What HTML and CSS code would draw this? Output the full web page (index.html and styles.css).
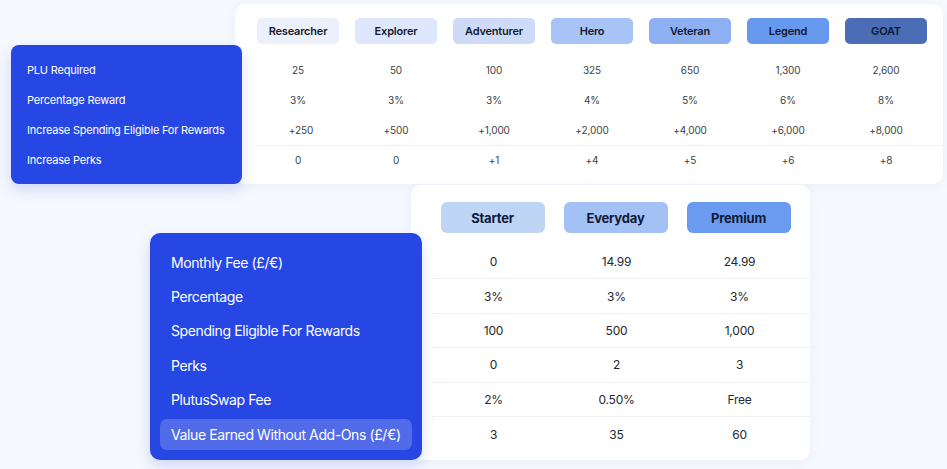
FILE: index.html
```
<!DOCTYPE html>
<html>
<head>
<meta charset="utf-8">
<link rel="stylesheet" href="styles.css">
</head>
<body>
<section class="top">
  <div class="panel panel-sm">
    <div class="plabel">PLU Required</div>
    <div class="plabel">Percentage Reward</div>
    <div class="plabel">Increase Spending Eligible For Rewards</div>
    <div class="plabel">Increase Perks</div>
  </div>
  <div class="card card-top">
    <div class="trow head">
      <div class="cell"><span class="pill t1">Researcher</span></div>
      <div class="cell"><span class="pill t2">Explorer</span></div>
      <div class="cell"><span class="pill t3">Adventurer</span></div>
      <div class="cell"><span class="pill t4">Hero</span></div>
      <div class="cell"><span class="pill t5">Veteran</span></div>
      <div class="cell"><span class="pill t6">Legend</span></div>
      <div class="cell"><span class="pill t7">GOAT</span></div>
    </div>
    <div class="trow data">
      <div class="cell">25</div><div class="cell">50</div><div class="cell">100</div><div class="cell">325</div><div class="cell">650</div><div class="cell">1,300</div><div class="cell">2,600</div>
    </div>
    <div class="trow data">
      <div class="cell">3%</div><div class="cell">3%</div><div class="cell">3%</div><div class="cell">4%</div><div class="cell">5%</div><div class="cell">6%</div><div class="cell">8%</div>
    </div>
    <div class="trow data lined">
      <div class="cell">+250</div><div class="cell">+500</div><div class="cell">+1,000</div><div class="cell">+2,000</div><div class="cell">+4,000</div><div class="cell">+6,000</div><div class="cell">+8,000</div>
    </div>
    <div class="trow data">
      <div class="cell">0</div><div class="cell">0</div><div class="cell">+1</div><div class="cell">+4</div><div class="cell">+5</div><div class="cell">+6</div><div class="cell">+8</div>
    </div>
  </div>
</section>
<section class="bottom">
  <div class="panel panel-lg">
    <div class="blabel">Monthly Fee (£/€)</div>
    <div class="blabel">Percentage</div>
    <div class="blabel">Spending Eligible For Rewards</div>
    <div class="blabel">Perks</div>
    <div class="blabel">PlutusSwap Fee</div>
    <div class="blabel active">Value Earned Without Add-Ons (£/€)</div>
  </div>
  <div class="card card-bot">
    <div class="brow head">
      <div class="bcell"><span class="bpill s1">Starter</span></div>
      <div class="bcell"><span class="bpill s2">Everyday</span></div>
      <div class="bcell"><span class="bpill s3">Premium</span></div>
    </div>
    <div class="brow data"><div class="bcell">0</div><div class="bcell">14.99</div><div class="bcell">24.99</div></div>
    <div class="brow data"><div class="bcell">3%</div><div class="bcell">3%</div><div class="bcell">3%</div></div>
    <div class="brow data"><div class="bcell">100</div><div class="bcell">500</div><div class="bcell">1,000</div></div>
    <div class="brow data"><div class="bcell">0</div><div class="bcell">2</div><div class="bcell">3</div></div>
    <div class="brow data"><div class="bcell">2%</div><div class="bcell">0.50%</div><div class="bcell">Free</div></div>
    <div class="brow data last"><div class="bcell">3</div><div class="bcell">35</div><div class="bcell">60</div></div>
  </div>
</section>
</body>
</html>
```
FILE: styles.css
```
* { box-sizing: border-box; }
html, body { margin: 0; padding: 0; }
body {
  width: 947px;
  height: 469px;
  overflow: hidden;
  background: #f5f8fd;
  font-family: Inter, "Noto Sans", sans-serif;
  color: #2a2f3a;
}
.top {
  display: flex;
  align-items: flex-start;
  padding: 4px 0 0 11px;
  height: 185px;
}
.panel {
  position: relative;
  z-index: 2;
  background: #2647e4;
  color: #fff;
  border-radius: 8px;
  box-shadow: 0 6px 14px rgba(38, 71, 228, 0.18);
  white-space: nowrap;
}
.panel-sm {
  width: 231px;
  height: 139px;
  margin-top: 41px;
  padding: 10px 0 0 16px;
  flex: none;
}
.plabel {
  height: 30px;
  display: flex;
  align-items: center;
  font-size: 11px;
  letter-spacing: -0.2px;
}
.card {
  position: relative;
  z-index: 1;
  background: #fff;
  border-radius: 10px;
  box-shadow: 0 2px 10px rgba(120, 140, 190, 0.08);
  flex: none;
}
.card-top {
  width: 708px;
  height: 180px;
  margin-left: -7px;
  padding: 14px 0 0 14px;
}
.trow {
  display: grid;
  grid-template-columns: repeat(7, 98px);
}
.trow.head { height: 26px; margin-bottom: 11px; }
.trow.data { height: 30px; font-size: 10px; color: #3a3f48; letter-spacing: -0.1px; }
.trow.lined {
  box-shadow: 0 1px 0 #eef1f6;
  margin-left: 6px;
  grid-template-columns: 92px repeat(6, 98px);
  width: 688px;
}
.cell {
  display: flex;
  align-items: center;
  justify-content: center;
}
.pill {
  width: 82px;
  height: 26px;
  border-radius: 5px;
  display: flex;
  align-items: center;
  justify-content: center;
  font-size: 11px;
  font-weight: 600;
  letter-spacing: -0.2px;
  color: #141b2e;
}
.t1 { background: #ebf0fc; }
.t2 { background: #dee7fb; }
.t3 { background: #cddbf9; }
.t4 { background: #a8c3f5; }
.t5 { background: #8db0f2; }
.t6 { background: #6698ee; }
.t7 { background: #4a6db6; color: #0e1830; }

.bottom {
  display: flex;
  align-items: flex-start;
  padding-left: 150px;
}
.panel-lg {
  width: 272px;
  height: 227px;
  margin-top: 48px;
  padding: 12px 10px 0 10px;
  border-radius: 10px;
}
.blabel {
  height: 34.4px;
  display: flex;
  align-items: center;
  padding-left: 11px;
  font-size: 14px;
  letter-spacing: -0.4px;
}
.blabel.active {
  height: 31px;
  margin-top: 1.7px;
  background: rgba(255, 255, 255, 0.2);
  border-radius: 7px;
}
.card-bot {
  width: 399px;
  height: 275px;
  margin-left: -11px;
  padding: 17px 0 0 20px;
}
.brow {
  display: grid;
  grid-template-columns: repeat(3, 123px);
}
.brow.head { height: 31px; margin-bottom: 12px; }
.brow.data {
  height: 34.4px;
  font-size: 12px;
  letter-spacing: -0.2px;
  color: #23272f;
  border-bottom: 1px solid #eef0f5;
  margin-left: 1px;
  width: 378px;
}
.brow.data.last { border-bottom: none; }
.bcell {
  display: flex;
  align-items: center;
  justify-content: center;
}
.bpill {
  width: 104px;
  height: 31px;
  border-radius: 6px;
  display: flex;
  align-items: center;
  justify-content: center;
  font-size: 13px;
  font-weight: 700;
  letter-spacing: -0.2px;
  color: #0f1a36;
}
.s1 { background: #bfd5f6; }
.s2 { background: #a3c1f4; }
.s3 { background: #6a9bf0; }
```
